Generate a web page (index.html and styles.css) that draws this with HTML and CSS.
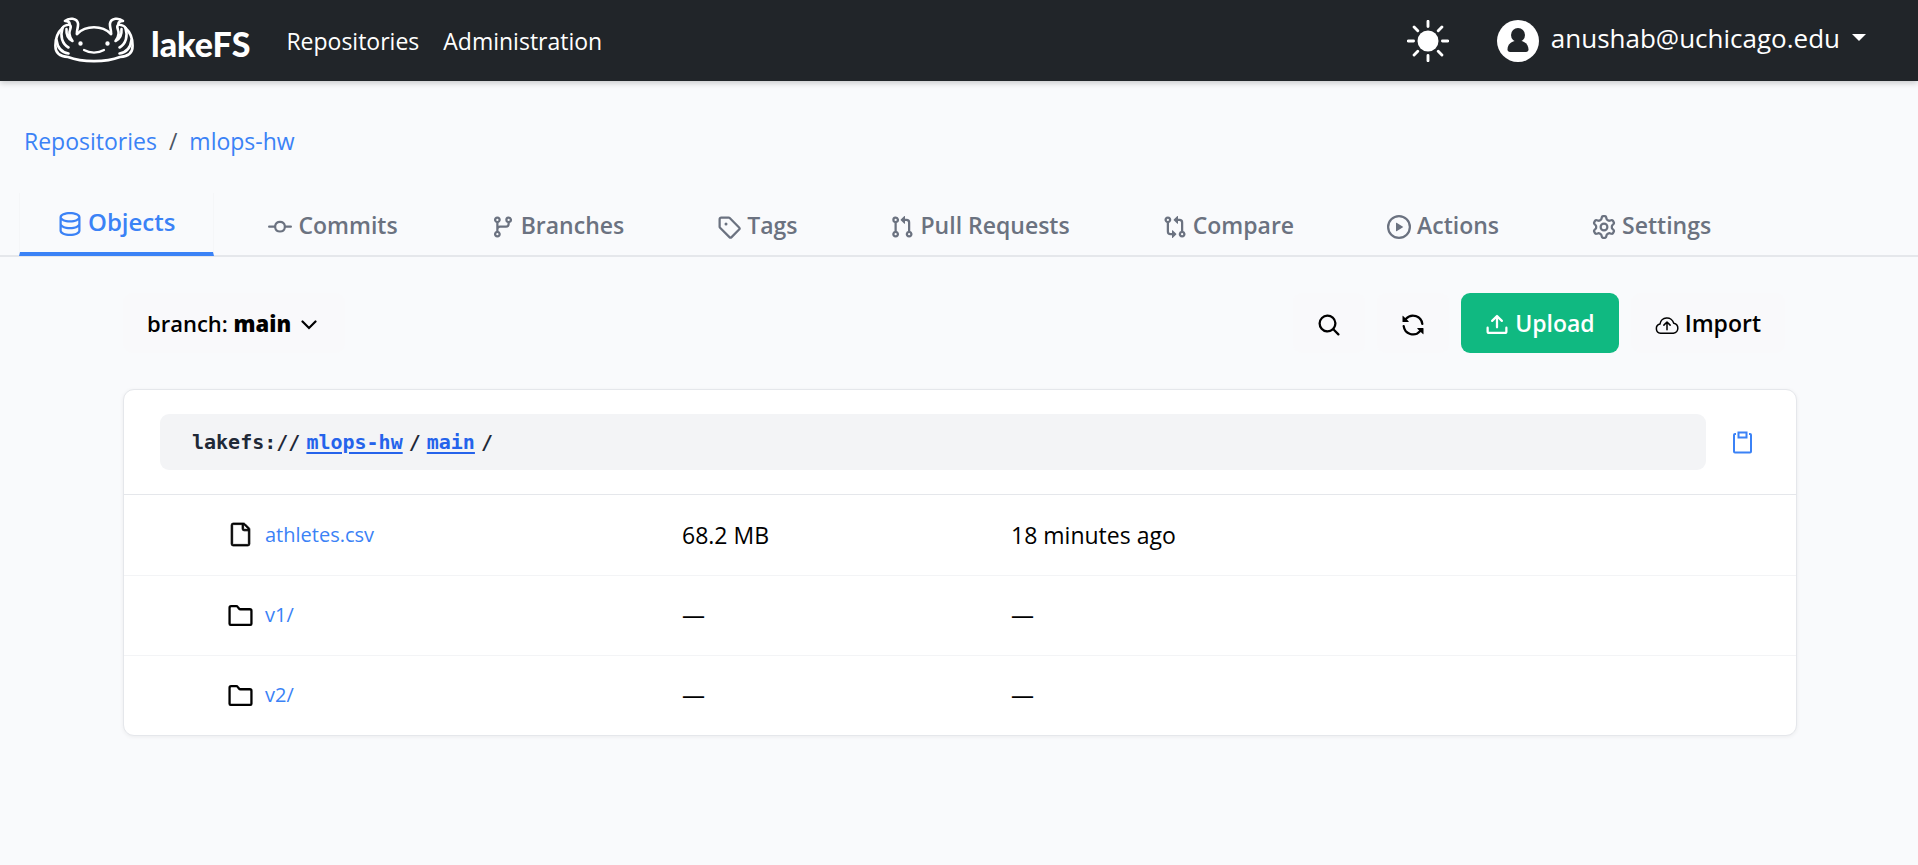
FILE: index.html
```html
<!DOCTYPE html>
<html lang="en">
<head>
<meta charset="utf-8">
<title>lakeFS</title>
<link rel="stylesheet" href="styles.css">
</head>
<body>
<header class="navbar">
  <a class="brand" href="#">
    <svg class="brand-mark" viewBox="0 0 80 46" fill="none" stroke="currentColor" stroke-width="2.600" stroke-linecap="round" stroke-linejoin="round">
      <path d="M23 17C32 8 48 8 57 17"/>
      <path d="M23 17C22.500 13 24.500 10 24 6.500C23 0.800 15 0.500 11 4C14 4 16 5 15.500 7.500C12 8 9 9 8.500 11C4 15 1.300 22 1.400 29C1.400 35 5 39.500 14 40C28 45.500 52 45.500 66 40C75 39.500 78.600 35 78.600 29C78.700 22 76 15 71.500 11C71 9 68 8 64.500 7.500C64 5 66 4 69 4C65 0.500 57 0.800 56 6.500C55.500 10 57.500 13 57 17"/>
      <path d="M15.500 7.500C19 10 14.500 13 15.500 17C15.700 20 17 22 18.500 24C14.500 22 12 18 12.500 12"/>
      <path d="M8.500 11C6 19 8 27 14.500 30.500M2.500 23C3.500 31 8 35.500 14.500 36.500"/>
      <path d="M64.500 7.500C61 10 65.500 13 64.500 17C64.300 20 63 22 61.500 24C65.500 22 68 18 67.500 12"/>
      <path d="M71.500 11C74 19 72 27 65.500 30.500M77.500 23C76.500 31 72 35.500 65.500 36.500"/>
      <path d="M30 33C36 36.500 44 36.500 50 33" stroke-width="2.200"/>
      <circle cx="26.500" cy="26.500" r="1.200" fill="currentColor" stroke-width="2"/><circle cx="53.500" cy="26.500" r="1.200" fill="currentColor" stroke-width="2"/>
    </svg>
    <span class="brand-name">lakeFS</span>
  </a>
  <nav class="main-nav">
    <a href="#">Repositories</a>
    <a href="#">Administration</a>
  </nav>
  <div class="nav-tools">
    <button class="theme" type="button" aria-label="Toggle theme">
      <svg viewBox="0 0 16 16" fill="currentColor"><circle cx="8" cy="8" r="4"/><path d="M8 .5v2M8 13.500v2M.5 8h2M13.500 8h2M2.700 2.700l1.400 1.400M11.900 11.900l1.400 1.400M13.300 2.700l-1.400 1.400M4.100 11.900l-1.400 1.400" stroke="currentColor" stroke-width="1.100" stroke-linecap="round"/></svg>
    </button>
    <button class="account" type="button">
      <svg class="avatar" viewBox="0 0 42 42"><circle cx="21" cy="21" r="21" fill="#fff"/><circle cx="21" cy="15" r="7" fill="#212529"/><path d="M10.500 29.500C10.500 24 15 20.500 21 20.500S31.500 24 31.500 29.500C31.500 31 30.500 32 29 32H13C11.500 32 10.500 31 10.500 29.500Z" fill="#212529"/></svg>
      <span class="email">anushab@uchicago.edu</span>
      <svg class="caret" viewBox="0 0 14 7"><path d="M0 0H14L7 7Z" fill="currentColor"/></svg>
    </button>
  </div>
</header>

<nav class="breadcrumb" aria-label="Breadcrumb">
  <a href="#">Repositories</a><span>/</span><a href="#">mlops-hw</a>
</nav>

<nav class="tabs" aria-label="Repository">
  <a class="tab tab-active" href="#"><svg viewBox="0 0 16 16"><path d="M1 3.500c0-.626.292-1.165.7-1.590.406-.422.956-.767 1.579-1.041C4.525.32 6.195 0 8 0s3.475.32 4.722.869c.622.274 1.172.62 1.578 1.040.408.426.7.965.7 1.591v9c0 .626-.292 1.165-.7 1.590-.406.422-.956.767-1.579 1.041C11.475 15.680 9.805 16 8 16s-3.475-.32-4.722-.869c-.622-.274-1.172-.62-1.578-1.040-.408-.426-.7-.965-.7-1.591Zm1.500 0c0 .133.058.318.282.551.227.237.591.483 1.101.707C4.898 5.205 6.353 5.500 8 5.500s3.101-.295 4.118-.742c.508-.224.873-.471 1.100-.708.224-.232.282-.417.282-.55 0-.133-.058-.318-.282-.551-.227-.237-.591-.483-1.101-.707C11.102 1.795 9.647 1.500 8 1.500s-3.101.295-4.118.742c-.508.224-.873.471-1.100.708-.224.232-.282.417-.282.550Zm0 4.500c0 .133.058.318.282.551.227.237.591.483 1.101.707C4.898 9.705 6.353 10 8 10s3.101-.295 4.118-.742c.508-.224.873-.471 1.100-.708.224-.232.282-.417.282-.55V5.724c-.241.150-.503.286-.778.407C11.475 6.680 9.805 7 8 7s-3.475-.32-4.722-.869a6.150 6.150 0 0 1-.778-.407Zm0 2.225V12.500c0 .133.058.318.282.550.227.237.592.484 1.100.708 1.016.447 2.471.742 4.118.742s3.102-.295 4.117-.742c.510-.224.874-.470 1.101-.707.224-.233.282-.418.282-.551v-2.275c-.241.150-.503.285-.778.406-1.247.549-2.917.869-4.722.869s-3.475-.32-4.722-.869a6.327 6.327 0 0 1-.778-.406Z"/></svg>Objects</a>
  <a class="tab" href="#"><svg viewBox="0 0 16 16"><path d="M11.930 8.500a4.002 4.002 0 0 1-7.860 0H.75a.75.750 0 0 1 0-1.500h3.320a4.002 4.002 0 0 1 7.860 0h3.320a.75.750 0 0 1 0 1.500Zm-1.430-.75a2.500 2.500 0 1 0-5 0 2.500 2.500 0 0 0 5 0Z"/></svg>Commits</a>
  <a class="tab" href="#"><svg viewBox="0 0 16 16"><path d="M9.500 3.250a2.250 2.250 0 1 1 3 2.122V6A2.500 2.500 0 0 1 10 8.500H6a1 1 0 0 0-1 1v1.128a2.251 2.251 0 1 1-1.500 0V5.372a2.250 2.250 0 1 1 1.500 0v1.836A2.493 2.493 0 0 1 6 7h4a1 1 0 0 0 1-1v-.628A2.250 2.250 0 0 1 9.500 3.250Zm-6 0a.75.750 0 1 0 1.500 0 .75.750 0 0 0-1.500 0Zm8.250-.75a.75.750 0 1 0 0 1.500.75.750 0 0 0 0-1.500ZM4.250 12a.75.750 0 1 0 0 1.500.75.750 0 0 0 0-1.500Z"/></svg>Branches</a>
  <a class="tab" href="#"><svg viewBox="0 0 16 16"><path d="M1 7.775V2.750C1 1.784 1.784 1 2.750 1h5.025c.464 0 .910.184 1.238.513l6.250 6.250a1.750 1.750 0 0 1 0 2.474l-5.026 5.026a1.750 1.750 0 0 1-2.474 0l-6.250-6.250A1.752 1.752 0 0 1 1 7.775Zm1.500 0c0 .066.026.130.073.177l6.250 6.250a.25.250 0 0 0 .354 0l5.025-5.025a.25.250 0 0 0 0-.354l-6.250-6.250a.25.250 0 0 0-.177-.073H2.750a.25.250 0 0 0-.25.250ZM6 5a1 1 0 1 1 0 2 1 1 0 0 1 0-2Z"/></svg>Tags</a>
  <a class="tab" href="#"><svg viewBox="0 0 16 16"><path d="M1.500 3.250a2.250 2.250 0 1 1 3 2.122v5.256a2.251 2.251 0 1 1-1.500 0V5.372A2.250 2.250 0 0 1 1.500 3.250Zm5.677-.177L9.573.677A.25.250 0 0 1 10 .854V2.500h1A2.500 2.500 0 0 1 13.500 5v5.628a2.251 2.251 0 1 1-1.500 0V5a1 1 0 0 0-1-1h-1v1.646a.25.250 0 0 1-.427.177L7.177 3.427a.25.250 0 0 1 0-.354ZM3.750 2.500a.75.750 0 1 0 0 1.500.75.750 0 0 0 0-1.500Zm0 9.500a.75.750 0 1 0 0 1.500.75.750 0 0 0 0-1.500Zm8.250.75a.75.750 0 1 0 1.500 0 .75.750 0 0 0-1.500 0Z"/></svg>Pull Requests</a>
  <a class="tab" href="#"><svg viewBox="0 0 16 16"><path d="M9.573.677A.25.250 0 0 1 10 .854V2.500h1A2.500 2.500 0 0 1 13.500 5v5.628a2.251 2.251 0 1 1-1.500 0V5a1 1 0 0 0-1-1h-1v1.646a.25.250 0 0 1-.427.177L7.177 3.427a.25.250 0 0 1 0-.354ZM6 12v-1.646a.25.250 0 0 1 .427-.177l2.396 2.396a.25.250 0 0 1 0 .354l-2.396 2.396A.25.250 0 0 1 6 15.146V13.500H5A2.500 2.500 0 0 1 2.500 11V5.372a2.250 2.250 0 1 1 1.500 0V11a1 1 0 0 0 1 1ZM4 3.250a.75.750 0 1 0-1.500 0 .75.750 0 0 0 1.500 0ZM12.750 12a.75.750 0 1 0 0 1.500.75.750 0 0 0 0-1.500Z"/></svg>Compare</a>
  <a class="tab" href="#"><svg viewBox="0 0 16 16"><path d="M8 0a8 8 0 1 1 0 16A8 8 0 0 1 8 0ZM1.500 8a6.500 6.500 0 1 0 13 0 6.500 6.500 0 0 0-13 0Zm4.879-2.773 4.264 2.559a.25.250 0 0 1 0 .428l-4.264 2.559A.25.250 0 0 1 6 10.559V5.442a.25.250 0 0 1 .379-.215Z"/></svg>Actions</a>
  <a class="tab" href="#"><svg viewBox="0 0 16 16"><path d="M8 0a8.200 8.200 0 0 1 .701.031C9.444.095 9.990.645 10.160 1.290l.288 1.107c.018.066.079.158.212.224.231.114.454.243.668.386.123.082.233.090.299.071l1.103-.303c.644-.176 1.392.021 1.820.630.270.385.506.792.704 1.218.315.675.111 1.422-.364 1.891l-.814.806c-.049.048-.098.147-.088.294.016.257.016.515 0 .772-.010.147.038.246.088.294l.814.806c.475.469.679 1.216.364 1.891a7.977 7.977 0 0 1-.704 1.217c-.428.610-1.176.807-1.820.630l-1.102-.302c-.067-.019-.177-.011-.3.071a5.909 5.909 0 0 1-.668.386c-.133.066-.194.158-.211.224l-.290 1.106c-.168.646-.715 1.196-1.458 1.260a8.006 8.006 0 0 1-1.402 0c-.743-.064-1.289-.614-1.458-1.260l-.289-1.106c-.018-.066-.079-.158-.212-.224a5.738 5.738 0 0 1-.668-.386c-.123-.082-.233-.090-.299-.071l-1.103.303c-.644.176-1.392-.021-1.820-.630a8.120 8.120 0 0 1-.704-1.218c-.315-.675-.111-1.422.363-1.891l.815-.806c.050-.048.098-.147.088-.294a6.214 6.214 0 0 1 0-.772c.010-.147-.038-.246-.088-.294l-.815-.806C.635 6.045.431 5.298.746 4.623a7.920 7.920 0 0 1 .704-1.217c.428-.610 1.176-.807 1.820-.630l1.102.302c.067.019.177.011.300-.071.214-.143.437-.272.668-.386.133-.066.194-.158.211-.224l.290-1.106C6.009.645 6.556.095 7.299.030 7.530.010 7.764 0 8 0Zm-.571 1.525c-.036.003-.108.036-.137.146l-.289 1.105c-.147.561-.549.967-.998 1.189-.173.086-.340.183-.500.290-.417.278-.970.423-1.529.270l-1.103-.303c-.109-.030-.175.016-.195.045-.220.312-.412.644-.573.990-.014.031-.021.110.059.190l.815.806c.411.406.562.957.530 1.456a4.709 4.709 0 0 0 0 .582c.032.499-.119 1.050-.530 1.456l-.815.806c-.081.080-.073.159-.059.190.162.346.353.677.573.989.020.030.085.076.195.046l1.102-.303c.560-.153 1.113-.008 1.530.270.161.107.328.204.501.290.447.222.850.629.997 1.189l.289 1.105c.029.109.101.143.137.146a6.600 6.600 0 0 0 1.142 0c.036-.003.108-.036.137-.146l.289-1.105c.147-.561.549-.967.998-1.189.173-.086.340-.183.500-.290.417-.278.970-.423 1.529-.270l1.103.303c.109.029.175-.016.195-.045.220-.313.411-.644.573-.990.014-.031.021-.110-.059-.190l-.815-.806c-.411-.406-.562-.957-.530-1.456a4.709 4.709 0 0 0 0-.582c-.032-.499.119-1.050.530-1.456l.815-.806c.081-.080.073-.159.059-.190a6.464 6.464 0 0 0-.573-.989c-.020-.030-.085-.076-.195-.046l-1.102.303c-.560.153-1.113.008-1.530-.270a4.440 4.440 0 0 0-.501-.290c-.447-.222-.850-.629-.997-1.189l-.289-1.105c-.029-.110-.101-.143-.137-.146a6.600 6.600 0 0 0-1.142 0ZM11 8a3 3 0 1 1-6 0 3 3 0 0 1 6 0ZM9.500 8a1.500 1.500 0 1 0-3.001.001A1.500 1.500 0 0 0 9.500 8Z"/></svg>Settings</a>
</nav>

<main class="content">
  <div class="toolbar">
    <button class="btn btn-branch" type="button">
      <span>branch: <strong>main</strong></span>
      <svg class="chevron" viewBox="0 0 16 10" fill="none" stroke="currentColor" stroke-width="2.200" stroke-linecap="round"><path d="M1.500 1.500L8 8L14.500 1.500"/></svg>
    </button>
    <div class="actions">
      <button class="btn" type="button" aria-label="Search"><svg viewBox="0 0 16 16"><path d="M10.680 11.740a6 6 0 0 1-7.922-8.982 6 6 0 0 1 8.982 7.922l3.040 3.040a.749.749 0 1 1-1.060 1.060ZM11.500 7a4.499 4.499 0 1 0-8.997 0A4.499 4.499 0 0 0 11.500 7Z"/></svg></button>
      <button class="btn" type="button" aria-label="Refresh"><svg viewBox="0 0 16 16"><path d="M1.705 8.005a.75.750 0 0 1 .834.656 5.500 5.500 0 0 0 9.592 2.970l-1.204-1.204a.25.250 0 0 1 .177-.427h3.646a.25.250 0 0 1 .25.250v3.646a.25.250 0 0 1-.427.177l-1.380-1.380A7.002 7.002 0 0 1 1.050 8.840a.75.750 0 0 1 .656-.834ZM8 2.500a5.487 5.487 0 0 0-4.131 1.869l1.204 1.204A.25.250 0 0 1 4.896 6H1.250A.25.250 0 0 1 1 5.750V2.104a.25.250 0 0 1 .427-.177l1.380 1.380A7.002 7.002 0 0 1 14.950 7.160a.75.750 0 0 1-1.490.178A5.500 5.500 0 0 0 8 2.500Z"/></svg></button>
      <button class="btn btn-success" type="button"><svg viewBox="0 0 16 16"><path d="M2.750 14A1.750 1.750 0 0 1 1 12.250v-2.500a.75.750 0 0 1 1.500 0v2.500c0 .138.112.250.250.250h10.500a.25.250 0 0 0 .25-.25v-2.500a.75.750 0 0 1 1.500 0v2.500A1.750 1.750 0 0 1 13.250 14Z"/><path d="M11.780 4.720a.749.749 0 1 1-1.060 1.060L8.750 3.811V9.500a.75.750 0 0 1-1.500 0V3.811L5.280 5.780a.749.749 0 1 1-1.060-1.060l3.250-3.250a.749.749 0 0 1 1.060 0Z"/></svg>Upload</button>
      <button class="btn" type="button"><svg viewBox="0 0 16 16" fill="none" stroke="currentColor" stroke-linecap="round" stroke-linejoin="round"><path d="M3.700 13.500A3.100 3.100 0 0 1 3.300 7.400A4.700 4.700 0 0 1 12.500 6.800A3.400 3.400 0 0 1 12.300 13.500Z" fill="none"/><path d="M8 11.200V6.200M5.900 8.100L8 6L10.100 8.100" fill="none"/></svg>Import</button>
    </div>
  </div>

  <section class="card">
    <div class="card-header">
      <div class="uri"><span>lakefs://</span><a href="#">mlops-hw</a><span>/</span><a href="#">main</a><span>/</span></div>
      <button class="copy" type="button" aria-label="Copy URI"><svg viewBox="0 0 19 23" fill="none" stroke="currentColor" stroke-width="2"><path d="M3 3H2Q1 3 1 4V20.500Q1 21.500 2 21.500H17Q18 21.500 18 20.500V4Q18 3 17 3H16"/><rect x="5.500" y="1.500" width="8" height="5"/></svg></button>
    </div>
    <table class="objects">
      <colgroup><col class="col-name"><col class="col-size"><col class="col-time"></colgroup>
      <tbody>
        <tr>
          <td><div class="entry"><svg viewBox="0 0 24 24"><path d="M3 3a2 2 0 0 1 2-2h9.982a2 2 0 0 1 1.414.586l4.018 4.018A2 2 0 0 1 21 7.018V21a2 2 0 0 1-2 2H5a2 2 0 0 1-2-2Zm2-.5a.5.500 0 0 0-.5.500v18a.5.500 0 0 0 .5.500h14a.5.500 0 0 0 .5-.5V8.500h-4a2 2 0 0 1-2-2v-4Zm10 0v4a.5.500 0 0 0 .5.500h4a.5.500 0 0 0-.146-.336l-4.018-4.018A.5.500 0 0 0 15 2.500Z" stroke="currentColor" stroke-width="0.800"/></svg><a href="#">athletes.csv</a></div></td>
          <td>68.2 MB</td>
          <td>18 minutes ago</td>
        </tr>
        <tr>
          <td><div class="entry"><svg viewBox="0 0 24 24" stroke="currentColor" stroke-width="2.200"><path d="M1.500 20V4.500Q1.500 3 3 3H8Q8.800 3 9.300 3.700L10.500 5.300Q11 6 12 6H21Q22.500 6 22.500 7.500V20Q22.500 21 21.500 21H2.500Q1.500 21 1.500 20Z" fill="none"/></svg><a href="#">v1/</a></div></td>
          <td>—</td>
          <td>—</td>
        </tr>
        <tr>
          <td><div class="entry"><svg viewBox="0 0 24 24" stroke="currentColor" stroke-width="2.200"><path d="M1.500 20V4.500Q1.500 3 3 3H8Q8.800 3 9.300 3.700L10.500 5.300Q11 6 12 6H21Q22.500 6 22.500 7.500V20Q22.500 21 21.500 21H2.500Q1.500 21 1.500 20Z" fill="none"/></svg><a href="#">v2/</a></div></td>
          <td>—</td>
          <td>—</td>
        </tr>
      </tbody>
    </table>
  </section>
</main>
</body>
</html>
```

FILE: styles.css
```css
* { box-sizing: border-box; }

body {
  margin: 0;
  background: #f9fafc;
  color: #000;
  font: 23px/36px "Open Sans", "Noto Sans", sans-serif;
}

a { color: #3b82f6; text-decoration: none; }

button {
  padding: 0;
  border: 0;
  background: none;
  color: inherit;
  font: inherit;
  cursor: pointer;
}

svg { display: block; flex: none; fill: currentColor; }

/* Top bar */
.navbar {
  display: flex;
  align-items: center;
  height: 81px;
  padding: 0 52px 0 54px;
  background: #212529;
  color: #fff;
  box-shadow: 0 2px 6px rgba(0, 0, 0, 0.2);
}

.navbar a { color: #fff; }

.brand { display: flex; align-items: center; gap: 17px; padding-bottom: 2px; }
.brand-mark { width: 80px; height: 46px; fill: none; }
.brand-name { padding-top: 8px; font: 900 34px/36px Lato, sans-serif; }

.main-nav { display: flex; gap: 24px; margin-left: 36px; }

.nav-tools { display: flex; align-items: center; gap: 48px; margin-left: auto; }
.theme svg { width: 42px; height: 42px; }
.account { display: flex; align-items: center; gap: 12px; font-size: 26px; }
.email { padding-bottom: 6px; }
.avatar { width: 42px; height: 42px; }
.caret { width: 14px; height: 7px; margin-bottom: 6px; }

/* Breadcrumb */
.breadcrumb { display: flex; gap: 12px; padding: 42px 24px 34px; }
.breadcrumb span { color: #4b5563; }

/* Tabs */
.tabs {
  display: flex;
  align-items: flex-end;
  gap: 15px;
  padding: 0 19px;
  border-bottom: 2px solid #e5e7eb;
}

.tab {
  display: flex;
  align-items: center;
  gap: 6px;
  padding: 12px 39px;
  color: #6b7280;
  font-weight: 600;
}

.tab svg { width: 24px; height: 24px; margin-top: 4px; }

.tab-active {
  margin-bottom: -1px;
  padding: 11px 38px 12px;
  border: 1px solid #f5f6f8;
  border-top: 0;
  border-bottom: 4px solid #3b82f6;
  color: #3b82f6;
  font-size: 24px;
}

/* Content */
.content { padding: 36px 121px 36px 123px; }

.toolbar { display: flex; justify-content: space-between; padding-right: 12px; }
.actions { display: flex; gap: 12px; }

.btn {
  display: flex;
  align-items: center;
  gap: 6px;
  padding: 12px 24px;
  border-radius: 9px;
  background: #f9f9fb;
  font-weight: 600;
}

.btn svg { width: 24px; height: 24px; margin-top: 4px; }
.btn-branch { font-size: 22px; }
.btn .chevron { width: 16px; height: 10px; margin: 4px 4px 0; fill: none; }
.btn-success { background: #10b981; color: #fff; }

/* Object list */
.card {
  margin-top: 36px;
  border: 1px solid #e5e7eb;
  border-radius: 11px;
  background: #fff;
  box-shadow: 0 1px 4px rgba(0, 0, 0, 0.06);
}

.card-header {
  display: flex;
  align-items: center;
  gap: 27px;
  padding: 24px 44px 24px 36px;
  border-bottom: 1px solid #e5e7eb;
}

.uri {
  display: flex;
  flex: 1;
  gap: 6px;
  padding: 10px 32px;
  border-radius: 9px;
  background: #f3f4f6;
  color: #1f2937;
  font: 700 20px/36px "DejaVu Sans Mono", monospace;
}

.uri a { color: #2563eb; text-decoration: underline; text-decoration-thickness: 2px; text-underline-offset: 3px; }

.copy { color: #3b82f6; }
.copy svg { width: 19px; height: 23px; fill: none; }

.objects { width: 100%; border-collapse: collapse; table-layout: fixed; }
.objects td { height: 80px; padding: 0; }
.objects tr + tr td { border-top: 1px solid #f3f4f6; }
.col-name { width: 558px; }
.col-size { width: 329px; }

.entry { display: flex; align-items: center; gap: 12px; padding-left: 104px; font-size: 20px; }
.entry svg { width: 25px; height: 25px; }
```
